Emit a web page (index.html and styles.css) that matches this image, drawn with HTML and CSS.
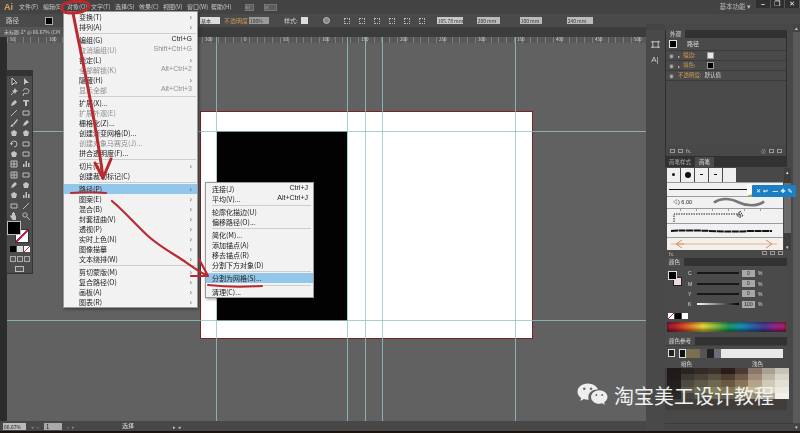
FILE: index.html
```html
<!DOCTYPE html>
<html lang="zh">
<head>
<meta charset="utf-8">
<title>Illustrator</title>
<link rel="stylesheet" href="styles.css">
</head>
<body>
<div class="app">
  <header class="menubar">
    <span class="logo">Ai</span>
    <nav class="menus">
      <span>文件(F)</span><span>编辑(E)</span><span>对象(O)</span><span>文字(T)</span><span>选择(S)</span><span>效果(C)</span><span>视图(V)</span><span>窗口(W)</span><span>帮助(H)</span>
    </nav>
    <span class="mb-icon">Br</span>
    <span class="mb-icon wide">St</span>
    <span class="workspace">基本功能 ▾</span>
    <div class="winbtns"><span>–</span><span>❐</span><span>✕</span></div>
  </header>

  <div class="controlbar">
    <span class="c-label">路径</span>
    <span class="c-swatch"></span>
    <span class="c-hidden"></span>
    <span class="c-field short">基本</span>
    <span class="c-orange">不透明度</span>
    <span class="c-field op">100%</span>
    <span class="c-label st">样式:</span>
    <span class="c-white"></span>
    <span class="c-globe"></span>
    <span class="c-gap"></span>
    <span class="c-dots"></span><span class="c-dots"></span><span class="c-dots"></span><span class="c-dots"></span><span class="c-dots"></span><span class="c-dots"></span>
    <span class="c-field w1">105.78 mm</span>
    <span class="c-field w2">200 mm</span>
    <span class="c-field w3">100 mm</span>
    <span class="c-field w4">240 mm</span>
  </div>

  <div class="tabbar"><span class="doc-tab">未标题-2* @ 66.67% (CM</span></div>

  <div class="work">
    <div class="leftstrip"></div>
    <div class="center">
      <div class="ruler">
        <span>50</span><span>100</span><span></span><span></span><span></span><span>300</span><span>0</span><span>50</span><span>100</span><span>150</span><span>200</span><span>250</span><span>300</span><span>350</span><span>400</span><span>450</span><span>500</span>
      </div>
      <main class="canvas">
        <div class="artboard"></div>
        <div class="blackrect"></div>
        <i class="guide v g1"></i><i class="guide v g2"></i><i class="guide v g3"></i><i class="guide v g4"></i><i class="guide v g5"></i>
        <i class="guide h g6"></i><i class="guide h g7"></i>
      </main>
      <footer class="statusbar">
        <span class="s-zoom">66.67%</span>
        <span class="s-arrows">◂ ◃</span>
        <span class="s-page">1</span>
        <span class="s-arrows">▹ ▸</span>
        <span class="s-mode">选择</span>
        <span class="s-arrows right">▸ ◂</span>
      </footer>
    </div>

    <aside class="dock">
      <div class="dock-strip">
        <svg class="strip-ic" viewBox="0 0 10 10"><path d="M2 1v8M8 1v8M0 2h10M0 8h10" stroke="#ccc" fill="none"/></svg>
        <span class="strip-a">A|</span>
      </div>
      <div class="panels">
        <section class="p-appearance">
          <div class="p-head"><span class="tab on">外观</span></div>
          <div class="ap-path"><span class="ap-box"></span><span>路径</span></div>
          <div class="ap-row"><span class="eye">◉</span><span class="tri">▸</span><span class="orange">描边:</span><span class="ap-mini"></span></div>
          <div class="ap-row"><span class="eye">◉</span><span class="tri">▸</span><span class="orange">填色:</span><span class="ap-mini black"></span></div>
          <div class="ap-row"><span class="eye">◉</span><span class="orange">不透明度:</span><span>默认值</span></div>
          <div class="p-spacer"></div>
          <div class="p-foot"><span class="foot-sq"></span><span class="foot-sq"></span><span>fx.</span><span class="foot-push">⊘</span><span class="foot-sq"></span><span class="foot-sq"></span></div>
        </section>

        <section class="p-brushes">
          <div class="p-head tall"><span class="tab">画笔样式</span><span class="tab on">画笔</span></div>
          <div class="br-body">
            <div class="br-list">
              <div class="br-chips">
                <span><b class="dot s"></b></span><span><b class="dot l"></b></span><span><b class="dot t"></b></span><span><b class="dot t"></b></span><span></span>
              </div>
              <div class="br-row line"><b></b><em class="knob"></em></div>
              <div class="br-row wave">
                <span class="br-num">◁) 6.00</span>
                <svg viewBox="0 0 60 12"><path d="M1 6C12-1 22 2 30 6s20 5 29-1" stroke="#777" stroke-width="3" fill="none"/></svg>
              </div>
              <div class="br-row dash">
                <svg viewBox="0 0 112 14"><path d="M6 13V5h66M72 5v5M72 2l3 5h-6z" stroke="#222" stroke-dasharray="1.5 1" fill="none"/><path d="M12 1h1M28 1h1M44 1h1M60 1h1M76 1h1M92 1h1" stroke="#444"/></svg>
              </div>
              <div class="br-row rough">
                <svg viewBox="0 0 112 8"><path d="M3 4C30 2 60 6 80 4L104 4" stroke="#111" stroke-width="2" stroke-dasharray="7 .6" fill="none"/></svg>
              </div>
              <div class="br-row peach">
                <svg viewBox="0 0 112 10"><path d="M3 5h106" stroke="#d9b6a0"/><path d="M8 5l6-4M8 5l6 4M8 5h8M104 5l-6-4M104 5l-6 4" stroke="#d6905f" fill="none"/></svg>
              </div>
            </div>
            <div class="br-scroll"><i>▴</i><b></b><i>▾</i></div>
          </div>
          <div class="p-foot small"><span>fx.</span><span class="foot-push foot-sq"></span><span class="foot-sq"></span><span class="foot-sq"></span></div>
        </section>

        <section class="p-colors">
          <div class="p-head"><span class="tab on">颜色</span></div>
          <div class="col-body">
            <div class="col-well"><i class="w-b"></i><i class="w-s"></i></div>
            <div class="sliders">
              <div class="sl"><span>C</span><b></b><em>0</em><span>%</span></div>
              <div class="sl"><span>M</span><b></b><em>0</em><span>%</span></div>
              <div class="sl"><span>Y</span><b></b><em>0</em><span>%</span></div>
              <div class="sl"><span>K</span><b class="k"></b><em>100</em><span>%</span></div>
            </div>
          </div>
          <div class="col-chips"><i class="none"></i><i class="blk"></i><i class="wht"></i></div>
          <div class="spectrum"></div>
        </section>

        <section class="p-guide">
          <div class="p-head"><span class="tab on">颜色参考</span></div>
          <div class="g-strip">
            <span class="g-box"></span>
            <span class="g-bar"><i class="g1c"></i><i class="g2c"></i><i class="g3c"></i><i class="g4c"></i><i class="g5c"></i></span>
          </div>
          <div class="g-labels"><span>暗色</span><span>浅色</span></div>
          <div class="g-grid">
            <i style="background:#1d1a19"></i><i style="background:#2a2522"></i><i style="background:#332a26"></i><i style="background:#3a302b"></i><i style="background:#2b1c1a"></i><i style="background:#4a3a33"></i><i style="background:#8a7768"></i><i style="background:#a9a294"></i><i style="background:#c6c3b7"></i>
            <i style="background:#1f1c1b"></i><i style="background:#3d3833"></i><i style="background:#4a4239"></i><i style="background:#5a4f40"></i><i style="background:#4f3d33"></i><i style="background:#6e5948"></i><i style="background:#a08c79"></i><i style="background:#bdb6a6"></i><i style="background:#d7d4c8"></i>
            <i style="background:#221f1d"></i><i style="background:#4e4941"></i><i style="background:#5e5848"></i><i style="background:#6e6850"></i><i style="background:#6a5842"></i><i style="background:#8a7458"></i><i style="background:#b3a488"></i><i style="background:#cfcab6"></i><i style="background:#e3e1d6"></i>
            <i style="background:#262321"></i><i style="background:#5c5a4f"></i><i style="background:#6e6e55"></i><i style="background:#82825c"></i><i style="background:#7f7a55"></i><i style="background:#a09468"></i><i style="background:#c2b894"></i><i style="background:#d9d6c2"></i><i style="background:#eceae0"></i>
            <i style="background:#2a2827"></i><i style="background:#464440"></i><i style="background:#55534a"></i><i style="background:#66654f"></i><i style="background:#60604a"></i><i style="background:#777258"></i><i style="background:#938d74"></i><i style="background:#b0ac9c"></i><i style="background:#f0efe8"></i>
          </div>
        </section>
        <div class="panel-foot"></div>
      </div>
      <div class="dock-scroll"><i>▴</i><b></b><i>▾</i></div>
    </aside>
  </div>
  <div class="bottomstrip"></div>

  <div class="toolpanel">
    <svg width="0" height="0" class="defs"><defs>
      <symbol id="t-arrow" viewBox="0 0 8 8"><path d="M2 0v7l2-2 3 0z"/></symbol>
      <symbol id="t-wand" viewBox="0 0 8 8"><path d="M1 7l4-4" stroke="#bbb" fill="none"/><path d="M5 0l1 2 2 1-2 1-1 2-1-2-2-1 2-1z"/></symbol>
      <symbol id="t-lasso" viewBox="0 0 8 8"><path d="M1 3c0-3 6-3 6 0S3 6 2 5l-1 3" stroke="#bbb" fill="none"/></symbol>
      <symbol id="t-pen" viewBox="0 0 8 8"><path d="M1 7l1-3 3-3 2 2-3 3z"/></symbol>
      <symbol id="t-t" viewBox="0 0 8 8"><path d="M1 1h6v1.500H5V7H3V2.500H1z"/></symbol>
      <symbol id="t-line" viewBox="0 0 8 8"><path d="M1 7l6-6" stroke="#bbb" fill="none"/></symbol>
      <symbol id="t-rect" viewBox="0 0 8 8"><path d="M1 2h6v4H1z" stroke="#bbb" fill="none"/></symbol>
      <symbol id="t-brush" viewBox="0 0 8 8"><path d="M7 0L3 5l1 1 4-5zM1 6c1-1 2-1 2.500 0S2 8 0 8c1-.5 1-1 1-2z"/></symbol>
      <symbol id="t-rot" viewBox="0 0 8 8"><path d="M1 4a3 3 0 1 1 3 3" stroke="#bbb" fill="none"/><path d="M0 3h3L1.500 5.500z"/></symbol>
      <symbol id="t-grid" viewBox="0 0 8 8"><path d="M1 1h6v6H1zM1 4h6M4 1v6" stroke="#bbb" fill="none"/></symbol>
      <symbol id="t-blob" viewBox="0 0 8 8"><path d="M1 3l3-2 3 2-1 4H2z"/></symbol>
      <symbol id="t-bars" viewBox="0 0 8 8"><path d="M1 7V4h1.500v3zM3.500 7V1H5v6zM6 7V3h1.500v4z"/></symbol>
      <symbol id="t-hand" viewBox="0 0 8 8"><path d="M2 7L0 4l1-1 1 1V1h1v2V0h1v3V1h1v3l1-1v2L6 8H2.500z"/></symbol>
      <symbol id="t-zoom" viewBox="0 0 8 8"><circle cx="3" cy="3" r="2.200" stroke="#bbb" fill="none"/><path d="M5 5l3 3" stroke="#bbb"/></symbol>
    </defs></svg>
    <div class="tp-grip"></div>
    <div class="tp-grid">
      <svg class="sel"><use href="#t-arrow"/></svg><svg><use href="#t-arrow"/></svg>
      <svg><use href="#t-wand"/></svg><svg><use href="#t-lasso"/></svg>
      <svg><use href="#t-pen"/></svg><svg><use href="#t-t"/></svg>
      <svg><use href="#t-line"/></svg><svg><use href="#t-rect"/></svg>
      <svg><use href="#t-brush"/></svg><svg><use href="#t-pen"/></svg>
      <svg><use href="#t-blob"/></svg><svg><use href="#t-blob"/></svg>
      <svg><use href="#t-rot"/></svg><svg><use href="#t-rect"/></svg>
      <svg><use href="#t-blob"/></svg><svg><use href="#t-rect"/></svg>
      <svg><use href="#t-grid"/></svg><svg><use href="#t-bars"/></svg>
      <svg><use href="#t-grid"/></svg><svg><use href="#t-rect"/></svg>
      <svg><use href="#t-pen"/></svg><svg><use href="#t-blob"/></svg>
      <svg><use href="#t-blob"/></svg><svg><use href="#t-bars"/></svg>
      <svg><use href="#t-rect"/></svg><svg><use href="#t-line"/></svg>
      <svg><use href="#t-hand"/></svg><svg><use href="#t-zoom"/></svg>
    </div>
    <div class="tp-fill"><i class="fill"></i><i class="stroke"></i></div>
    <div class="tp-modes"><i class="m1"></i><i class="m2"></i><i class="m3"></i></div>
    <div class="tp-modes small"><i></i><i></i><i></i></div>
    <div class="tp-screen"></div>
  </div>

  <ul class="menu main-menu">
    <li>变换(T)<u>›</u></li>
    <li>排列(A)<u>›</u></li>
    <li class="sep"></li>
    <li>编组(G)<kbd>Ctrl+G</kbd></li>
    <li class="off">取消编组(U)<kbd>Shift+Ctrl+G</kbd></li>
    <li>锁定(L)<u>›</u></li>
    <li class="off">全部解锁(K)<kbd>Alt+Ctrl+2</kbd></li>
    <li>隐藏(H)<u>›</u></li>
    <li class="off">显示全部<kbd>Alt+Ctrl+3</kbd></li>
    <li class="sep"></li>
    <li>扩展(X)...</li>
    <li class="off">扩展外观(E)</li>
    <li>栅格化(Z)...</li>
    <li>创建渐变网格(D)...</li>
    <li class="off">创建对象马赛克(J)...</li>
    <li>拼合透明度(F)...</li>
    <li class="sep"></li>
    <li>切片(S)<u>›</u></li>
    <li>创建裁切标记(C)</li>
    <li class="sep"></li>
    <li class="hot">路径(P)<u>›</u></li>
    <li>图案(E)<u>›</u></li>
    <li>混合(B)<u>›</u></li>
    <li>封套扭曲(V)<u>›</u></li>
    <li>透视(P)<u>›</u></li>
    <li>实时上色(N)<u>›</u></li>
    <li>图像描摹<u>›</u></li>
    <li>文本绕排(W)<u>›</u></li>
    <li class="sep"></li>
    <li>剪切蒙版(M)<u>›</u></li>
    <li>复合路径(O)<u>›</u></li>
    <li>画板(A)<u>›</u></li>
    <li>图表(R)<u>›</u></li>
  </ul>

  <ul class="menu sub-menu">
    <li>连接(J)<kbd>Ctrl+J</kbd></li>
    <li>平均(V)...<kbd>Alt+Ctrl+J</kbd></li>
    <li class="sep"></li>
    <li>轮廓化描边(U)</li>
    <li>偏移路径(O)...</li>
    <li class="sep"></li>
    <li>简化(M)...</li>
    <li>添加锚点(A)</li>
    <li>移去锚点(R)</li>
    <li>分割下方对象(D)</li>
    <li class="sep"></li>
    <li class="hot">分割为网格(S)...</li>
    <li class="sep wide"></li>
    <li>清理(C)...</li>
  </ul>

  <div class="tooltip">✕ ↩ &nbsp;— ✚ ✎</div>

  <svg class="marks" viewBox="0 0 800 433">
    <g fill="none" stroke="#b92a2f" stroke-linecap="round" stroke-linejoin="round">
      <path stroke-width="3" d="M62 8C60 3 72 1 80 1.500S91 4 88 8 78 13 70 13 63 11 62 7"/>
      <path stroke-width="3" d="M73 13C80 50 96 120 103 178"/>
      <path stroke-width="3" d="M95 163l8 15 8-19"/>
      <path stroke-width="2.200" d="M71 193c12-1 24-1 35 0"/>
      <path stroke-width="2.200" d="M112 201c12 10 24 24 36 35 10 9 22 16 30 21s18 13 28 18"/>
      <path stroke-width="2.200" d="M199 259l9 17-17 0"/>
      <path stroke-width="2" d="M208 285c18 2 36 2 54 1"/>
    </g>
  </svg>

  <div class="watermark">
    <svg class="wechat" viewBox="0 0 32 28">
      <path fill="#eee" d="M11 1C5 1 .5 5 .5 9.500c0 2.700 1.500 4.800 3.800 6.500l-1 3.200 3.800-2c1.300.4 2.500.6 4 .6h1c-.3-.9-.4-1.800-.4-2.700 0-4.300 4-7.700 9-7.700h1C20.700 3.900 16.300 1 11 1z"/>
      <path fill="#eee" d="M31.500 15c0-3.900-3.900-7-8.500-7s-8.500 3.100-8.500 7 3.900 7 8.500 7c1 0 2-.2 3-.5l2.800 1.600-.8-2.600c2-1.400 3.500-3.300 3.500-5.500z"/>
      <circle cx="7.500" cy="6.500" r="1.300" fill="#666"/><circle cx="14.500" cy="6.500" r="1.300" fill="#666"/>
      <circle cx="20" cy="13" r="1" fill="#666"/><circle cx="26" cy="13" r="1" fill="#666"/>
    </svg>
    <span>淘宝美工设计教程</span>
  </div>
</div>
</body>
</html>
```
FILE: styles.css
```css
* { box-sizing: border-box; margin: 0; padding: 0; }
html, body { width: 800px; height: 433px; overflow: hidden; background: #3a3a3a; }
body { font-family: "Noto Sans CJK SC", "Liberation Sans", sans-serif; font-size: 7px; color: #d8d8d8; line-height: 1; }
.app { position: relative; width: 800px; height: 433px; display: flex; flex-direction: column; overflow: hidden; background: #474747; }

/* the reference is a soft, recompressed screenshot */
.menubar, .controlbar, .tabbar, .ruler, .statusbar, .panels, .dock-strip, .toolpanel, .menu, .tooltip { filter: blur(.4px); }

/* top bars */
.menubar { height: 14px; flex: none; background: #434343; display: flex; align-items: center; position: relative; }
.logo { width: 19px; padding-left: 4px; font: bold 9px "Liberation Sans", sans-serif; color: #d3a35e; }
.menus { display: flex; width: 220px; font-size: 6px; color: #c8c8c8; white-space: nowrap; }
.menus span { width: 24px; flex: none; }
.mb-icon { width: 9px; height: 7px; background: #5c5c5c; border: 1px solid #777; font-size: 4px; color: #aaa; margin-left: 6px; overflow: hidden; }
.mb-icon.wide { width: 13px; margin-left: 10px; }
.workspace { margin-left: auto; margin-right: 5px; font-size: 6.500px; color: #b8b8b8; position: relative; top: -1px; }
.winbtns { display: flex; width: 44px; height: 8px; align-self: flex-start; background: #2f2f2f; }
.winbtns span { flex: 1; text-align: center; font: bold 7px/8px "Liberation Sans", "DejaVu Sans", sans-serif; color: #eee; border-right: 1px solid #555; }

.controlbar { height: 13px; flex: none; background: #4a4a4a; display: flex; align-items: center; font-size: 6.500px; padding-left: 6px; }
.c-label { width: 39px; color: #d0d0d0; }
.c-swatch { width: 8px; height: 8px; background: #000; border: 1px solid #aaa; }
.c-hidden { width: 147px; }
.c-field { height: 7px; background: #bbb; color: #333; font-size: 5px; line-height: 7px; padding-left: 1px; flex: none; white-space: nowrap; }
.c-field.short { width: 20px; background: #ddd; }
.c-orange { color: #cf9a52; margin-left: 4px; width: 24px; flex: none; font-size: 6px; white-space: nowrap; }
.c-field.op { width: 20px; background: #9a9a9a; margin-left: 1px; }
.c-label.st { width: auto; margin-left: 15px; font-size: 6px; }
.c-white { width: 7px; height: 7px; background: #ddd; margin-left: 3px; }
.c-globe { width: 7px; height: 7px; border-radius: 50%; background: #888; border: 1px solid #bbb; margin-left: 15px; }
.c-gap { width: 14px; }
.c-dots { width: 6px; height: 6px; border: 1px dotted #bbb; margin-right: 9px; flex: none; }
.c-field.w1 { width: 26px; margin-left: 3px; background: #c8c8c8; }
.c-field.w2 { width: 23px; margin-left: 14px; }
.c-field.w3 { width: 22px; margin-left: 20px; }
.c-field.w4 { width: 26px; margin-left: 25px; }

.tabbar { height: 10px; flex: none; background: #3c3c3c; margin-right: 154px; }
.doc-tab { display: block; width: 63px; height: 10px; background: #555; padding-left: 4px; font-size: 5px; line-height: 10px; color: #ccc; white-space: nowrap; overflow: hidden; }

.work { flex: 1; display: flex; min-height: 0; }
.leftstrip { width: 7px; flex: none; background: #2c2c2c; }
.center { flex: 1; display: flex; flex-direction: column; min-width: 0; }
.ruler { height: 6px; flex: none; background: #595959 repeating-linear-gradient(90deg, #7d7d7d 0 1px, transparent 1px 7.800px); display: flex; font-size: 4.500px; line-height: 5px; color: #d4d4d4; padding-left: 2px; overflow: hidden; }
.ruler span { width: 39px; flex: none; padding-left: 1px; }
.canvas { flex: 1; background: #616161; position: relative; min-height: 0; }
.artboard { position: absolute; left: 193px; top: 68px; width: 333px; height: 228px; background: #fff; border: 1px solid #7b2024; }
.blackrect { position: absolute; left: 210px; top: 88px; width: 130px; height: 190px; background: #020203; }
.guide { position: absolute; background: #8fc6c6; opacity: .8; }
.guide.v { top: -6px; bottom: 0; width: 1px; }
.guide.h { left: 0; right: 0; height: 1px; }
.g1 { left: 209px; } .g2 { left: 340px; } .g3 { left: 358px; } .g4 { left: 375px; } .g5 { left: 508px; }
.g6 { top: 88px; } .g7 { top: 277px; }
.statusbar { height: 10px; flex: none; background: #474747; display: flex; align-items: center; font-size: 6px; margin-left: -7px; position: relative; }
.s-zoom { width: 23px; height: 7px; margin-left: 3px; background: #bbb; color: #222; font-size: 5px; line-height: 7px; padding-left: 1px; flex: none; }
.s-arrows { width: 18px; color: #888; text-align: center; font-size: 5px; flex: none; }
.s-page { width: 18px; height: 7px; background: #aaa; color: #222; line-height: 7px; padding-left: 2px; flex: none; }
.s-mode { margin-left: 42px; color: #ddd; flex: none; }
.s-arrows.right { color: #ccc; margin-left: 34px; }
.bottomstrip { height: 2px; flex: none; background: #1c1209; }

/* dock */
.dock { width: 154px; flex: none; display: flex; margin-top: -13px; background: #444; position: relative; }
.dock-strip { width: 18px; flex: none; background: #494949; margin-top: 6px; padding-top: 10px; display: flex; flex-direction: column; align-items: center; gap: 6px; }
.strip-ic { width: 9px; height: 9px; }
.strip-a { font: 8px "Liberation Sans", sans-serif; color: #ccc; }
.panels { width: 129px; flex: none; background: #484848; padding: 6px 0 0 1px; display: flex; flex-direction: column; }
.dock-scroll { width: 7px; flex: none; background: #5a5a5a; display: flex; flex-direction: column; font-size: 5px; text-align: center; color: #ddd; }
.dock-scroll b { flex: 1; }
.dock-scroll i { font-style: normal; height: 8px; background: #444; line-height: 8px; }
.p-head { height: 8px; flex: none; background: #323232; display: flex; font-size: 5.500px; line-height: 8px; }
.p-head.tall { height: 10px; line-height: 10px; }
.tab { padding: 0 4px; color: #aaa; }
.tab.on { background: #4c4c4c; color: #ddd; }

.p-appearance { height: 127px; flex: none; display: flex; flex-direction: column; background: #4a4a4a; border: 1px solid #2f2f2f; border-top: 0; margin-right: 6px; }
.ap-path { height: 13px; display: flex; align-items: center; gap: 10px; padding-left: 3px; font-size: 6px; border-bottom: 1px solid #3b3b3b; }
.ap-box { width: 8px; height: 8px; background: #000; border: 1px solid #ddd; }
.ap-row { height: 10px; display: flex; align-items: center; gap: 3px; padding-left: 3px; font-size: 5.500px; border-bottom: 1px solid #3b3b3b; }
.eye { color: #aaa; font-size: 5px; width: 6px; }
.tri { font-size: 4px; color: #ccc; }
.orange { color: #cf9a52; }
.ap-mini { width: 7px; height: 7px; background: #e8e8e8; border: 1px solid #999; margin-left: 8px; }
.ap-mini.black { background: #000; }
.p-spacer { flex: 1; }
.p-foot { height: 11px; display: flex; align-items: center; gap: 3px; padding: 0 4px; font-size: 5px; color: #bbb; background: #484848; }
.p-foot.small { height: 6px; }
.foot-sq { width: 5px; height: 4px; border: 1px solid #999; }
.foot-push { margin-left: auto; }

.p-brushes { height: 99px; flex: none; background: #484848; margin-right: 6px; display: flex; flex-direction: column; }
.br-body { flex: 1; display: flex; padding: 1px 0 0 2px; min-height: 0; }
.br-list { width: 116px; flex: none; display: flex; flex-direction: column; gap: 1px; background: #9a9a9a; }
.br-chips { height: 14px; display: flex; gap: 1px; background: #484848; }
.br-chips span { width: 13px; background: #efefef; display: flex; align-items: center; justify-content: center; }
.dot { display: block; background: #111; border-radius: 50%; }
.dot.s { width: 3px; height: 3px; }
.dot.l { width: 6px; height: 6px; }
.dot.t { width: 3px; height: 1px; border-radius: 0; }
.br-row { background: #f1f1f1; display: flex; align-items: center; padding: 0 1px; color: #222; }
.br-row svg { width: 112px; display: block; }
.line { height: 13px; padding: 0 2px; }
.line b { display: block; width: 78px; height: 1px; background: #111; }
.knob { display: block; width: 5px; height: 11px; background: #fff; border-radius: 2px; box-shadow: 1px 2px 0 #a9a23f; font-style: normal; }
.wave { height: 12px; }
.br-num { width: 45px; flex: none; padding-left: 4px; font: 5.500px "Liberation Sans", sans-serif; }
.wave svg { width: 52px; height: 11px; }
.dash { height: 14px; }
.dash svg { height: 14px; }
.rough { height: 13px; }
.rough svg { height: 8px; }
.peach { height: 12px; background: #f4efe9; }
.peach svg { height: 10px; }
.br-scroll { width: 7px; margin-left: 1px; flex: none; display: flex; flex-direction: column; background: #3e3e3e; font-size: 5px; text-align: center; }
.br-scroll i { font-style: normal; height: 7px; line-height: 7px; color: #ddd; }
.br-scroll b { display: block; flex: 1; margin: 8px 0 10px; background: #6c6c6c; }

.p-colors { height: 79px; flex: none; background: #4a4a4a; margin-right: 6px; margin-top: 2px; display: flex; flex-direction: column; }
.col-body { display: flex; height: 47px; padding: 2px 0 0 3px; flex: none; }
.col-well { position: relative; width: 14px; height: 16px; margin-top: 3px; flex: none; }
.col-well i { position: absolute; display: block; width: 9px; height: 9px; }
.w-b { left: 0; top: 0; background: #000; border: 1px solid #ddd; z-index: 1; }
.w-s { left: 5px; top: 6px; background: #f0d8e0; border: 1px solid #222; }
.sliders { margin-left: 6px; display: flex; flex-direction: column; }
.sl { height: 10.400px; display: flex; align-items: center; font: 5px "Liberation Sans", sans-serif; color: #ddd; }
.sl > span:first-child { width: 7px; }
.sl b { display: block; width: 42px; height: 2px; background: #181818; margin-left: 2px; }
.sl b.k { background: linear-gradient(90deg, #fff, #000); }
.sl em { width: 13px; height: 7px; background: #a8a8a8; color: #222; margin: 0 3px; font-style: normal; line-height: 7px; text-align: center; }
.col-chips { display: flex; height: 6px; margin: 0 0 3px 3px; flex: none; }
.col-chips i { display: block; width: 6px; height: 6px; margin-right: 1px; }
.none { background: linear-gradient(135deg, #fff 45%, #c22 45% 55%, #fff 55%); }
.blk { background: #000; }
.wht { background: #fff; }
.spectrum { height: 10px; flex: none; margin: 0 1px 0 2px; background: linear-gradient(90deg, #8b1d3a, #c1272d 8%, #e46b2b 18%, #e7d63a 30%, #7fb843 42%, #1f9a5a 52%, #1a8fb4 62%, #2c63ad 72%, #4a3b94 82%, #92278f 90%, #b01f5c); box-shadow: inset 0 -3px 3px rgba(0,0,0,.45), inset 0 2px 2px rgba(0,0,0,.3); }

.p-guide { height: 73px; flex: none; background: #403d3b; margin-right: 6px; display: flex; flex-direction: column; }
.g-strip { height: 14px; flex: none; display: flex; align-items: center; padding-left: 3px; gap: 4px; margin-top: 1px; background: #4a4a4a; }
.g-box { width: 7px; height: 8px; border: 1px solid #ddd; background: #222; }
.g-bar { width: 104px; height: 9px; display: flex; background: #e8e8e8; }
.g-bar i { display: block; height: 9px; width: 7px; }
.g1c { background: #111; border: 1px solid #ddd; }
.g2c { background: #7a7050; width: 14px !important; }
.g3c { background: #555; }
.g4c { background: #222; }
.g5c { background: #6d6d78; }
.g-labels { display: flex; justify-content: space-between; padding: 0 24px 0 16px; font-size: 5.500px; height: 8px; line-height: 8px; color: #ddd; flex: none; background: #4a4a4a; }
.g-grid { display: grid; grid-template-columns: repeat(9, 13.500px); grid-auto-rows: 6.200px; margin-left: 2px; gap: 0; }
.g-grid i { display: block; }
.panel-foot { flex: 1; border-top: 1px solid #3a3a3a; margin-top: 13px; background: #474747; }

/* tools */
.toolpanel { position: absolute; left: 6px; top: 70px; width: 27px; height: 204px; background: #4c4c4c; border: 1px solid #333; }
.defs { position: absolute; }
.tp-grip { height: 5px; background: #333; }
.tp-grid { display: grid; grid-template-columns: 12px 12px; grid-auto-rows: 10.300px; justify-content: center; padding-top: 1px; }
.tp-grid svg { width: 8px; height: 8px; margin: 1px 2px; fill: #c4c4c4; }
.tp-grid svg.sel { fill: #333; stroke: #ccc; }
.tp-fill { position: relative; height: 22px; margin-top: 0; }
.tp-fill i { position: absolute; display: block; width: 14px; height: 14px; }
.fill { left: 0; top: 0; background: #000; border: 1px solid #bbb; z-index: 1; }
.stroke { left: 8px; top: 8px; background: linear-gradient(135deg, #fff 42%, #b9274f 42% 56%, #fff 56%); border: 1px solid #333; }
.tp-modes { display: flex; justify-content: center; gap: 1px; margin-top: 3px; }
.tp-modes i { display: block; width: 6px; height: 6px; background: #777; }
.m1 { background: #000 !important; } .m2 { background: #ddd !important; } .m3 { background: linear-gradient(135deg, #fff 45%, #c22 45% 55%, #fff 55%) !important; }
.tp-modes.small { margin-top: 4px; }
.tp-modes.small i { border: 1px solid #aaa; background: #555; }
.tp-screen { width: 9px; height: 6px; margin: 4px auto 0; border: 1px solid #bbb; background: #555; }

/* menus */
.menu { position: absolute; list-style: none; background: #f2f2f2; border: 1px solid #999; box-shadow: 1px 1px 3px rgba(0,0,0,.45); font-size: 7px; color: #222; }
.main-menu { left: 63px; top: 11px; width: 135px; }
.sub-menu { left: 205px; top: 182px; width: 109px; padding-top: 1px; }
.menu li { height: 10px; line-height: 10px; padding-left: 15px; padding-right: 5px; display: flex; justify-content: space-between; white-space: nowrap; }
.sub-menu li { padding-left: 6px; }
.menu li.sep { height: 1px; margin: 1px 1px 1px 15px; padding: 0; background: #cdcdcd; }
.sub-menu li.sep { margin-left: 6px; margin-right: 2px; }
.sub-menu li.sep.wide { margin-top: 2px; }
.menu li.off { color: #8e8e8e; }
.menu li.hot { background: #92c6ea; }
.menu kbd { font: 7px "Liberation Sans", sans-serif; }
.menu u { text-decoration: none; font-size: 8px; color: #555; }

.tooltip { position: absolute; left: 752px; top: 185px; width: 44px; height: 12px; background: #1c7fc3; color: #fff; font: bold 6px/12px "DejaVu Sans", sans-serif; padding-left: 4px; white-space: nowrap; overflow: hidden; border-radius: 1px; }

.marks { position: absolute; left: 0; top: 0; width: 800px; height: 433px; pointer-events: none; }

.watermark { position: absolute; left: 577px; top: 382px; display: flex; align-items: center; gap: 6px; color: #f2f2f2; font-size: 20px; line-height: 28px; white-space: nowrap; }
.wechat { width: 31px; height: 28px; flex: none; }
```
